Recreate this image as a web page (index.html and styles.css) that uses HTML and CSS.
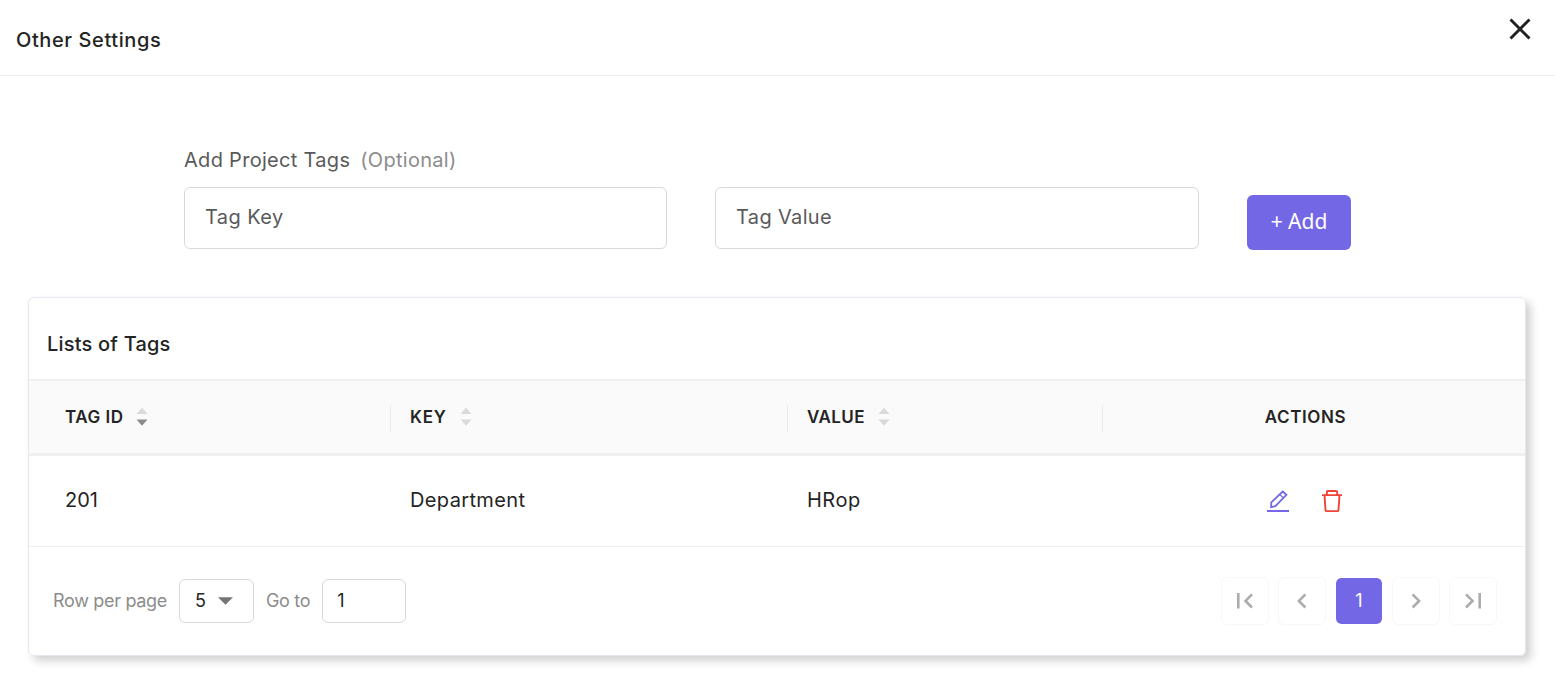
FILE: index.html
```html
<!DOCTYPE html>
<html lang="en">
<head>
<meta charset="utf-8">
<title>Other Settings</title>
<link rel="stylesheet" href="styles.css">
</head>
<body>
<header class="header">
  <h1 class="title"><span class="t-other">Other Settings</span></h1>
  <button class="close" aria-label="Close"><svg width="24" height="24" viewBox="0 0 24 24"><path d="M2.500 2.500l19 19M21.500 2.500l-19 19" stroke="#212121" stroke-width="2.900" fill="none"/></svg></button>
</header>
<main>
  <section class="form">
    <div class="label"><span class="t-add">Add Project Tags</span><span class="optional">(Optional)</span></div>
    <div class="fields">
      <div class="input"><span class="t-key">Tag Key</span></div>
      <div class="input wide"><span class="t-value">Tag Value</span></div>
      <button class="add"><span>+ Add</span></button>
    </div>
  </section>
  <section class="card">
    <h2 class="card-title"><span class="t-lists">Lists of Tags</span></h2>
    <div class="row head">
      <div class="cell"><span class="h-id">TAG ID</span><svg class="sort" width="12" height="20" viewBox="0 0 12 20"><path d="M.5 7L6 .7 11.500 7z" fill="#dadada"/><path d="M.5 12.500L6 18.800l5.500-6.300z" fill="#8c8c8c"/></svg></div>
      <div class="cell"><span class="h-key">KEY</span><svg class="sort" width="12" height="20" viewBox="0 0 12 20"><path d="M.5 7L6 .7 11.500 7zM.5 12.500L6 18.800l5.500-6.300z" fill="#dadada"/></svg></div>
      <div class="cell"><span class="h-value">VALUE</span><svg class="sort" width="12" height="20" viewBox="0 0 12 20"><path d="M.5 7L6 .7 11.500 7zM.5 12.500L6 18.800l5.500-6.300z" fill="#dadada"/></svg></div>
      <div class="cell actions"><span class="h-actions">ACTIONS</span></div>
    </div>
    <div class="row data">
      <div class="cell"><span class="d-id">201</span></div>
      <div class="cell"><span class="d-key">Department</span></div>
      <div class="cell"><span class="d-value">HRop</span></div>
      <div class="cell actions icons">
        <svg width="22" height="22" viewBox="0 0 22 22" fill="none" stroke="#7367e6"><path d="M0 21h22" stroke-width="2"/><path d="M15.700 1.500l3.700 3.400-11 11.200-4.300 1 .2-4.700z" stroke-width="1.800"/><path d="M12.800 4.500l3.600 3.400" stroke-width="1.300"/></svg>
        <svg width="20" height="22" viewBox="0 0 20 22" fill="none" stroke="#f04438" stroke-width="1.900"><path d="M0 5.100h20M4.900 5V1.900Q4.900 1 5.800 1h8.500q.9 0 .9.900V5M2.500 5l1 15.100q.1 1 1.100 1h10.800q1 0 1.100-1l1-15.100"/></svg>
      </div>
    </div>
    <footer class="footer">
      <div class="paging">
        <span class="t-row">Row per page</span>
        <div class="box select"><span>5</span><svg width="15" height="8" viewBox="0 0 15 8"><path d="M0 .3h15L7.500 7.800z" fill="#757575"/></svg></div>
        <span class="t-goto">Go to</span>
        <div class="box goto"><span>1</span></div>
      </div>
      <nav class="pages">
        <button class="page" aria-label="First page"><svg width="16" height="16" viewBox="0 0 16 16"><path d="M1.300 0v15.500M15 1.300L8.500 7.900l6.500 6.600"/></svg></button>
        <button class="page" aria-label="Previous page"><svg width="16" height="16" viewBox="0 0 16 16"><path d="M11.400 1.300L4.900 7.900l6.500 6.600"/></svg></button>
        <button class="page current">1</button>
        <button class="page" aria-label="Next page"><svg width="16" height="16" viewBox="0 0 16 16"><path d="M4.600 1.300l6.500 6.600-6.500 6.600"/></svg></button>
        <button class="page" aria-label="Last page"><svg width="16" height="16" viewBox="0 0 16 16"><path d="M14.700 0v15.500M1 1.300l6.500 6.600L1 14.500"/></svg></button>
      </nav>
    </footer>
  </section>
</main>
</body>
</html>
```
FILE: styles.css
```css
* { box-sizing: border-box; }
body {
  min-height: 100vh;
  margin: 0;
  background: #fff;
  color: #242424;
  font-family: Inter, "Liberation Sans", sans-serif;
  font-size: 20px;
  line-height: 24px;
}
button { padding: 0; border: 0; background: none; font: inherit; }
svg { display: block; flex: none; }
h1, h2 { margin: 0; font-size: 20px; font-weight: 500; }
main { padding-bottom: 29px; }
.header {
  display: flex;
  justify-content: space-between;
  height: 76px;
  padding: 17px 23px 0 16px;
  border-bottom: 1px solid #ededed;
}
.title { padding-top: 11px; }
.close { width: 24px; height: 24px; }
.form { padding: 72px 204px 0 184px; }
.label { display: flex; gap: 10px; color: #5a5a5a; }
.optional { color: #8c8c8c; letter-spacing: .28px; }
.t-other { letter-spacing: .6px; }
.t-add { letter-spacing: .3px; }
.t-key { letter-spacing: .4px; }
.t-value { letter-spacing: .35px; }
.t-lists { letter-spacing: .2px; }
.h-id { letter-spacing: .5px; }
.h-key { letter-spacing: .8px; }
.h-value { letter-spacing: .4px; }
.h-actions { letter-spacing: .6px; }
.d-key { letter-spacing: .37px; }
.d-value { letter-spacing: .5px; }
.t-row { letter-spacing: -.32px; }
.t-goto { letter-spacing: -.3px; }
.fields { display: flex; align-items: flex-start; margin-top: 15px; }
.input {
  width: 483px;
  height: 62px;
  margin-right: 48px;
  padding: 17px 20px;
  border: 1px solid #d9d9d9;
  border-radius: 6px;
  color: #5a5a5a;
}
.wide { width: 484px; }
.add {
  width: 104px;
  height: 55px;
  margin-top: 8px;
  padding-bottom: 3px;
  border-radius: 6px;
  background: #7367e6;
  color: #fff;
  font-family: "Noto Sans", sans-serif;
  font-size: 21px;
}
.card {
  width: 1498px;
  height: 359px;
  margin: 47px 0 0 28px;
  border: 1px solid #e6e8f0;
  border-radius: 6px;
  box-shadow: 5px 5px 8px rgba(0, 0, 0, .18);
}
.card-title { height: 81px; padding: 34px 18px 0; }
.row { display: grid; grid-template-columns: 362px 397px 315px 422px; }
.cell { display: flex; align-items: center; padding-left: 19px; }
.cell:first-child { padding-left: 36px; }
.actions { justify-content: center; padding-right: 36px; }
.head {
  height: 77px;
  border-top: 2px solid #f0f0f0;
  border-bottom: 3px solid #f0f0f0;
  background: #fafafa;
  font-size: 17px;
  font-weight: 600;
}
.head .cell { position: relative; }
.head .cell:not(:last-child)::after {
  content: "";
  position: absolute;
  top: 24px;
  right: 0;
  width: 1px;
  height: 27px;
  background: #ebebeb;
}
.sort { margin-left: 13px; }
.data { height: 91px; border-bottom: 1px solid #f0f0f0; }
.data .cell { padding-bottom: 2px; }
.data .icons { gap: 33px; padding-right: 38px; padding-bottom: 0; }
.footer {
  display: flex;
  justify-content: space-between;
  padding: 30px 28px 0 24px;
}
.paging { display: flex; align-items: center; height: 48px; color: #8c8c8c; font-size: 18px; }
.box {
  display: flex;
  align-items: center;
  height: 44px;
  border: 1px solid #d9d9d9;
  border-radius: 6px;
  color: #242424;
}
.select { gap: 12px; width: 75px; margin: 0 12px; padding-left: 15px; }
.goto { width: 84px; margin-left: 12px; padding-left: 14px; }
.pages { display: flex; gap: 9px; }
.page {
  display: flex;
  align-items: center;
  justify-content: center;
  width: 48px;
  height: 48px;
  border: 1px solid #f8f8f8;
  border-radius: 6px;
}
.page path { fill: none; stroke: #acacac; stroke-width: 2.600; }
.current {
  border-color: #fff;
  background: #7367e6;
  background-clip: padding-box;
  color: #fff;
  font-size: 18px;
}
```
